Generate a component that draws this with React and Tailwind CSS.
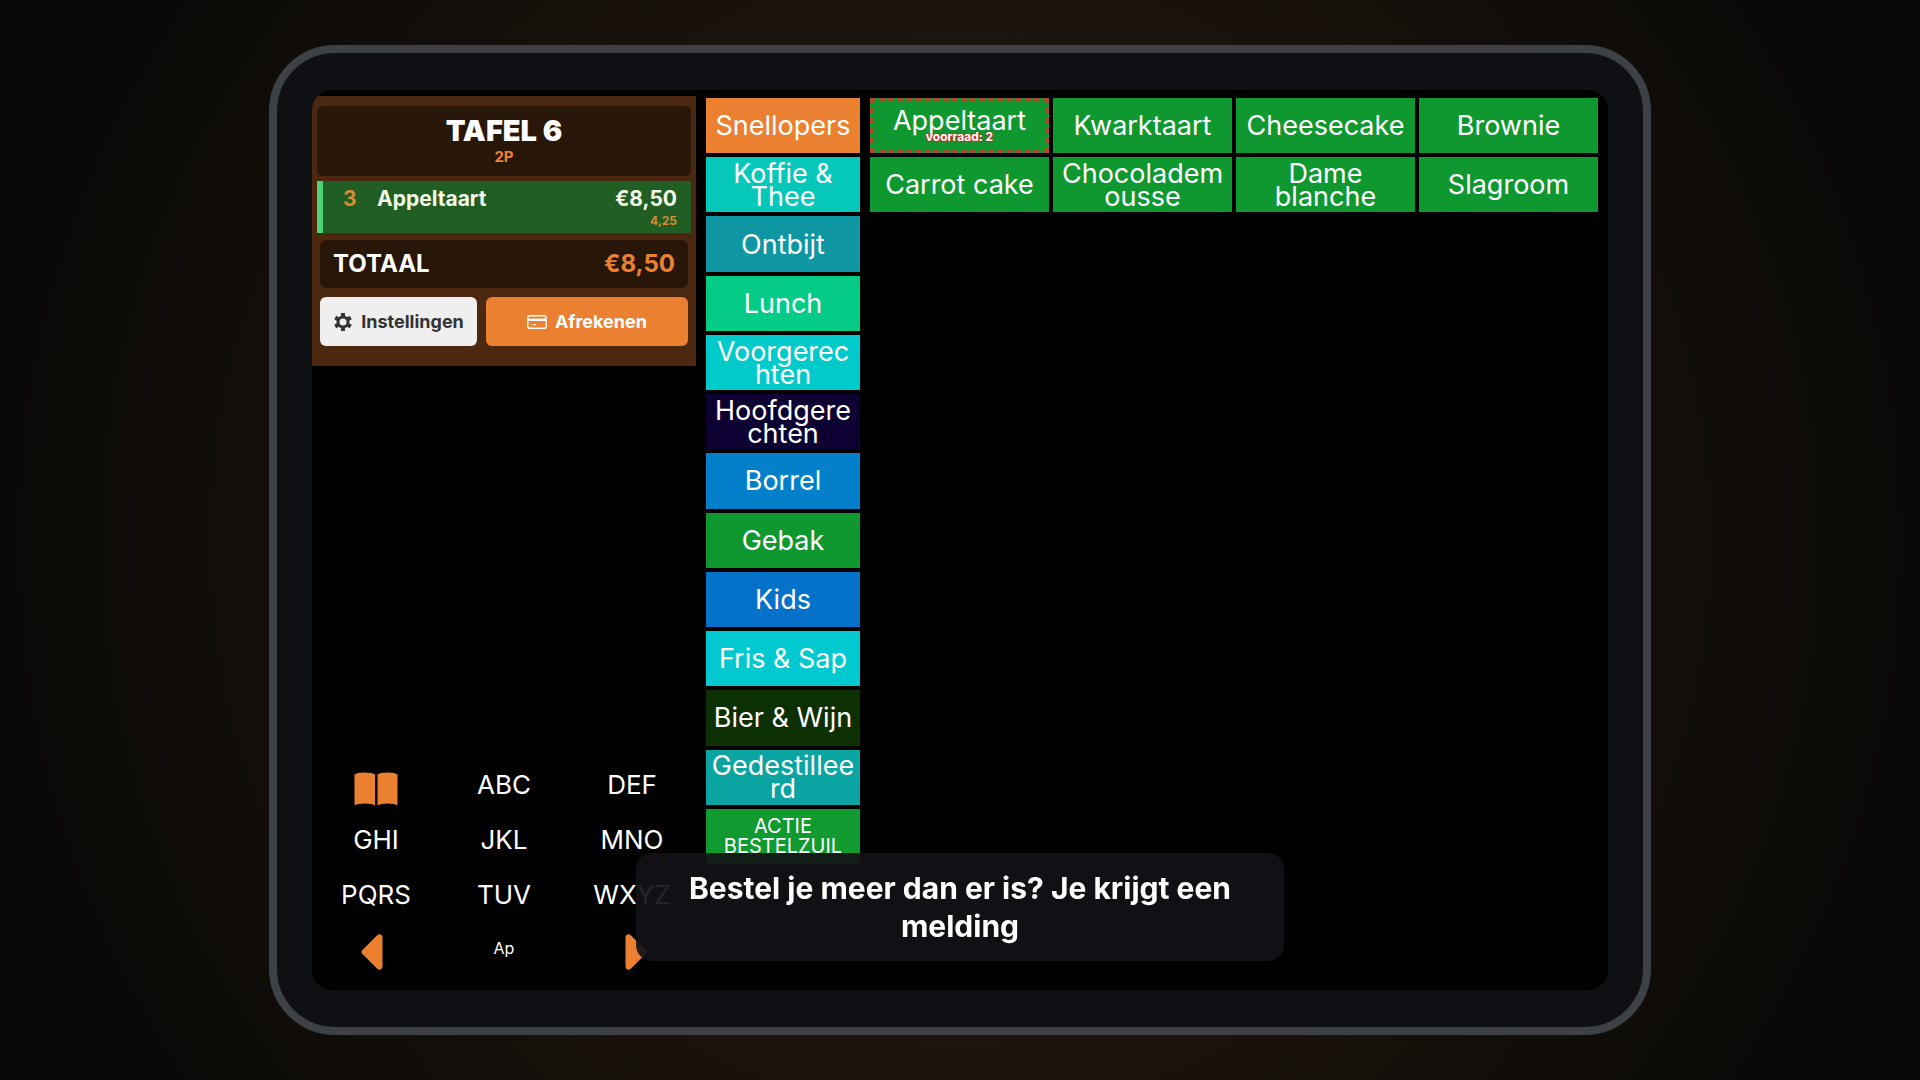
import React, { useState } from "react";

const categories = [
  { name: "Snellopers", color: "bg-[#eb8030]" },
  { name: "Koffie &\nThee", color: "bg-[#05c8bb]" },
  { name: "Ontbijt", color: "bg-[#0e96a3]" },
  { name: "Lunch", color: "bg-[#04cb86]" },
  { name: "Voorgerec\nhten", color: "bg-[#01cacb]" },
  { name: "Hoofdgere\nchten", color: "bg-[#0c0130]" },
  { name: "Borrel", color: "bg-[#0480ca]" },
  { name: "Gebak", color: "bg-[#109830]" },
  { name: "Kids", color: "bg-[#0572ca]" },
  { name: "Fris & Sap", color: "bg-[#02c8cf]" },
  { name: "Bier & Wijn", color: "bg-[#0c3002]" },
  { name: "Gedestillee\nrd", color: "bg-[#0aa5a2]" },
  { name: "ACTIE\nBESTELZUIL", color: "bg-[#109a30]", small: true },
];

const products = [
  { name: "Appeltaart", stock: 2 },
  { name: "Kwarktaart" },
  { name: "Cheesecake" },
  { name: "Brownie" },
  { name: "Carrot cake" },
  { name: "Chocoladem\nousse" },
  { name: "Dame\nblanche" },
  { name: "Slagroom" },
];

const GearIcon = () => (
  <svg viewBox="0 0 20 20" className="size-5" fill="none" stroke="currentColor" aria-hidden="true">
    <circle cx="10" cy="10" r="5" strokeWidth="3" />
    <g strokeWidth="4">
      <path d="M10 1v3.500M10 15.500V19" />
      <path d="M10 1v3.500M10 15.500V19" transform="rotate(60 10 10)" />
      <path d="M10 1v3.500M10 15.500V19" transform="rotate(120 10 10)" />
    </g>
  </svg>
);

const CardIcon = () => (
  <svg viewBox="0 0 20 14" className="h-[14px] w-5" fill="none" stroke="currentColor" aria-hidden="true">
    <rect x=".8" y=".8" width="18.400" height="12.400" rx="1.800" strokeWidth="1.400" />
    <path d="M1 4.800h18" strokeWidth="2.400" />
    <path d="M4 9.700h1.200M6.200 9.700h3" strokeWidth="1.300" />
  </svg>
);

const BookIcon = () => (
  <svg viewBox="0 0 44 34" className="mt-2 h-[34px] w-11 fill-[#eb8030]" aria-hidden="true">
    <path d="M.5 2.500C2 1.200 5 .5 10.500.5s9 .7 10.500 2V33.500c-2-1.200-6-1.900-10-1.900s-8.500.7-10.500 1.900z" />
    <path d="M23.500 2.500c1.500-1.300 4.500-2 10-2s8.500.7 10 2V33.500c-2-1.200-6-1.900-10-1.900s-8 .7-10 1.900z" />
  </svg>
);

const ArrowIcon = ({ flip }) => (
  <svg
    viewBox="0 0 22 36"
    className={`h-9 w-[22px] fill-[#eb8030] ${flip ? "rotate-180" : ""}`}
    aria-hidden="true"
  >
    <path d="M1.200 16.200 16.200 1.300C18.200-.7 21.500.5 21.500 3.400v29.200c0 2.900-3.300 4.100-5.300 2.100L1.200 19.800c-1-1-1-2.600 0-3.600z" />
  </svg>
);

const OrderPanel = () => (
  <section className="flex flex-col bg-[#4c2810] px-[5px] pt-[10px] pb-5">
    <header className="flex h-[70px] flex-col items-center justify-center rounded-md bg-[#281608]">
      <h1 className="text-[29px] leading-8 font-black text-white">TAFEL 6</h1>
      <p className="text-[15px] leading-5 font-bold text-[#eb8030]">2P</p>
    </header>

    <ul className="mt-[5px]">
      <li className="flex h-[52px] border-l-[6px] border-[#4fd374] bg-[#205e23] pt-[6px] pr-[14px] pl-5 text-[21px] leading-6 font-bold text-[#f4fbe8]">
        <span className="w-[34px] text-[#d98a33]">3</span>
        <span className="flex-1">Appeltaart</span>
        <span className="flex flex-col items-end">
          <span>€8,50</span>
          <span className="text-[12px] leading-5 text-[#d98a33]">4,25</span>
        </span>
      </li>
    </ul>

    <div className="mx-[3px] mt-[7px] flex h-12 items-center justify-between rounded-md bg-[#281608] px-[13px] text-[24px] font-bold">
      <span className="text-white">TOTAAL</span>
      <span className="text-[#eb8030]">€8,50</span>
    </div>

    <div className="mx-[3px] mt-[9px] flex gap-[9px]">
      <button
        type="button"
        className="flex h-[49px] w-[157px] items-center justify-center gap-2 rounded-md bg-[#efefef] text-[18px] font-bold text-[#333]"
      >
        <GearIcon />
        Instellingen
      </button>
      <button
        type="button"
        className="flex h-[49px] flex-1 items-center justify-center gap-2 rounded-md bg-[#eb8030] text-[18px] font-bold text-white"
      >
        <CardIcon />
        Afrekenen
      </button>
    </div>
  </section>
);

const Keypad = () => (
  <div className="grid auto-rows-[55px] grid-cols-3 text-[26px] text-white">
    <button type="button" aria-label="Boek" className="flex items-center justify-center">
      <BookIcon />
    </button>
    {["ABC", "DEF", "GHI", "JKL", "MNO", "PQRS", "TUV", "WXYZ"].map((key) => (
      <button key={key} type="button">
        {key}
      </button>
    ))}
    <button type="button" aria-label="Vorige" className="flex items-center justify-center pt-1 pr-2">
      <ArrowIcon />
    </button>
    <output className="flex items-center justify-center pb-1 text-[16px]">Ap</output>
    <button type="button" aria-label="Volgende" className="flex items-center justify-center pt-1 pl-2">
      <ArrowIcon flip />
    </button>
  </div>
);

const App = () => {
  const [active, setActive] = useState("Gebak");

  return (
    <main className="flex min-h-screen flex-col items-center bg-[radial-gradient(circle_at_center,#231a12_0%,#1b130d_49%,#110d09_70%,#090907_88%)] py-[45px] font-['Inter',sans-serif]">
      <div className="flex w-full max-w-[1382px] flex-1 rounded-[66px] border-8 border-[#3d4146] bg-[#0f1013] px-[35px] py-[37px]">
        <div className="flex flex-1 gap-[10px] overflow-hidden rounded-[20px] bg-black pr-[10px]">
          <aside className="flex w-96 flex-col justify-between pt-[6px] pb-[13px]">
            <OrderPanel />
            <Keypad />
          </aside>

          {/* Categories */}
          <nav className="mt-2 grid h-[766px] w-[154px] grid-rows-[repeat(13,minmax(0,1fr))] gap-1">
            {categories.map((cat) => (
              <button
                key={cat.name}
                type="button"
                aria-pressed={active === cat.name}
                onClick={() => setActive(cat.name)}
                className={`whitespace-pre-line text-white ${cat.color} ${
                  cat.small ? "text-[20px] leading-5" : "text-[27px] leading-[23px]"
                }`}
              >
                {cat.name}
              </button>
            ))}
          </nav>

          {/* Products */}
          <div className="mt-2 grid h-[766px] flex-1 grid-cols-4 grid-rows-[repeat(13,minmax(0,1fr))] gap-1">
            {products.map((product) => (
              <button
                key={product.name}
                type="button"
                className={`flex flex-col items-center justify-center bg-[#109830] text-[27px] leading-[23px] whitespace-pre-line text-white ${
                  product.stock ? "border-[3px] border-dashed border-[#a8502c]" : ""
                }`}
              >
                {product.name}
                {product.stock && (
                  <span className="text-[12px] leading-[10px] font-bold [text-shadow:0_0_2px_#e02020,0_0_2px_#e02020,0_1px_1px_#e02020]">
                    voorraad: {product.stock}
                  </span>
                )}
              </button>
            ))}
          </div>
        </div>
      </div>

      {/* Caption */}
      <p
        role="status"
        className="fixed bottom-[119px] left-1/2 w-[648px] -translate-x-1/2 rounded-2xl bg-[#121217]/92 px-10 py-4 text-center text-[30px] leading-[38px] font-bold text-white"
      >
        Bestel je meer dan er is? Je krijgt een melding
      </p>
    </main>
  );
};

export default App;
